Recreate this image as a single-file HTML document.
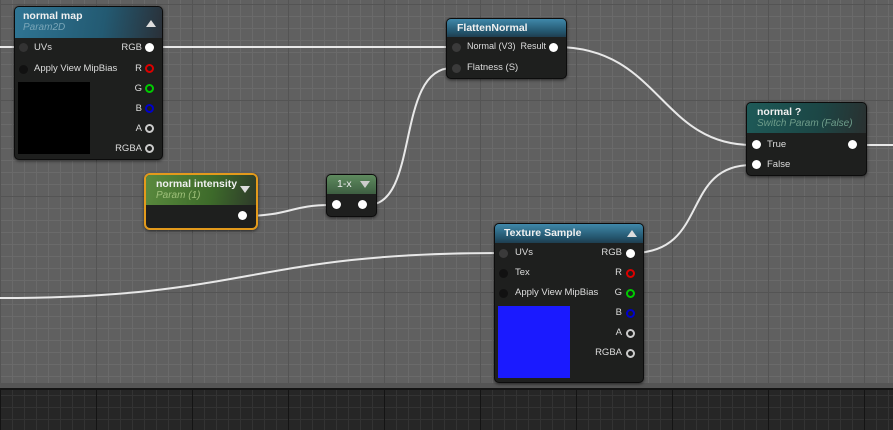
<!DOCTYPE html>
<html><head><meta charset="utf-8"><style>
*{margin:0;padding:0;box-sizing:border-box}
body{width:893px;height:430px;overflow:hidden;position:relative;font-family:"Liberation Sans",sans-serif;font-size:10px;color:#e6e6e6;
background-color:#606060;}
.grid{position:absolute;left:0;top:0;width:893px;height:388px;
background-image:
linear-gradient(to right,#545454 1px,transparent 1px),
linear-gradient(to bottom,#545454 1px,transparent 1px),
linear-gradient(to right,#6a6a6a 1px,transparent 1px),
linear-gradient(to bottom,#6a6a6a 1px,transparent 1px);
background-size:96px 96px,96px 96px,12px 12px,12px 12px;
background-position:0 4px,0 4px,0 4px,0 4px;}
.panel{position:absolute;left:0;top:388px;width:893px;height:42px;background-color:#262626;border-top:2px solid #141414;
background-image:
linear-gradient(to right,#141414 1px,transparent 1px),
linear-gradient(to right,#333 1px,transparent 1px),
linear-gradient(to bottom,#333 1px,transparent 1px);
background-size:96px 12px,12px 12px,12px 12px;background-position:0 0,0 0,0 5px}
.shadowbar{position:absolute;left:0;top:383px;width:893px;height:5px;background:#555}
svg{position:absolute;left:0;top:0}
.node{position:absolute;background:#1e1f1e;border:1px solid #0c0c0c;border-radius:5px;box-shadow:0 1px 3px rgba(0,0,0,.6);overflow:hidden}
.hd{position:relative;padding:3px 8px 0 8px;font-weight:bold;font-size:10.5px;color:#f0f0f0}
.blue{background:linear-gradient(to bottom,#3f88aa,#24566e 70%,#1f3e50)}
.blue2{background:linear-gradient(100deg,#2f7594 0%,#235a72 60%,#2a3038 100%)}
.teal{background:linear-gradient(100deg,#1e5a58 0%,#1c4645 60%,#2a3030 100%)}
.green{background:linear-gradient(100deg,#5a8a3e 0%,#3d6a2a 60%,#2e3a2a 100%)}
.sub{font-style:italic;font-weight:normal;font-size:10px;color:#7aa6b8}
.tri{position:absolute;right:6px;top:10px;width:0;height:0;border-left:5px solid transparent;border-right:5px solid transparent}
.up{border-bottom:7px solid #ddd}
.dn{border-top:7px solid #ddd}
.row{position:absolute;font-size:9.5px;color:#ddd;white-space:nowrap}
.rr{position:absolute;font-size:9.5px;color:#ddd;white-space:nowrap;text-align:right}
.pin{position:absolute;width:9px;height:9px;border-radius:50%}
.pw{background:#fff}
.po{border:2px solid}
.pd{background:#2b2b2b}
</style></head><body>
<div class="grid"></div>
<div class="shadowbar"></div>
<div class="panel"></div>
<svg width="893" height="430" fill="none" stroke="#e8e8e8" stroke-width="2">
<path d="M0 47 L20 47"/>
<path d="M152 47 L452 47"/>
<path d="M243 216 C290 216 290 205 331 205"/>
<path d="M368 205 C420 205 395 68 452 68"/>
<path d="M556 47 C660 47 660 145 752 145"/>
<path d="M632 253 C710 253 680 165 752 165"/>
<path d="M0 298 C250 298 250 253 500 253"/>
<path d="M858 145 L893 145"/>
</svg>

<!-- normal map -->
<div class="node" style="left:14px;top:6px;width:149px;height:154px">
<div class="hd blue2" style="height:31px">normal map<div class="sub">Param2D</div><div class="tri up" style="top:13px"></div></div>
</div>
<div class="row" style="left:34px;top:42px">UVs</div>
<div class="pin pd" style="left:19px;top:43px;background:#333"></div>
<div class="row" style="left:34px;top:63px">Apply View MipBias</div>
<div class="pin pd" style="left:19px;top:65px;background:#111"></div>
<div style="position:absolute;left:18px;top:82px;width:72px;height:72px;background:#000"></div>
<div class="rr" style="right:751px;top:42px">RGB</div><div class="pin pw" style="left:145px;top:43px"></div>
<div class="rr" style="right:751px;top:63px">R</div><div class="pin po" style="left:145px;top:64px;border-color:#d00"></div>
<div class="rr" style="right:751px;top:83px">G</div><div class="pin po" style="left:145px;top:84px;border-color:#0c0"></div>
<div class="rr" style="right:751px;top:103px">B</div><div class="pin po" style="left:145px;top:104px;border-color:#00c"></div>
<div class="rr" style="right:751px;top:123px">A</div><div class="pin po" style="left:145px;top:124px;border-color:#ccc"></div>
<div class="rr" style="right:751px;top:143px">RGBA</div><div class="pin po" style="left:145px;top:144px;border-color:#ccc"></div>

<!-- normal intensity -->
<div class="node" style="left:144px;top:173px;width:114px;height:57px;border:2px solid #e39a1c;border-radius:6px">
<div class="hd green" style="height:30px;padding-left:10px">normal intensity<div class="sub" style="color:#9fc07a">Param (1)</div><div class="tri dn" style="top:11px"></div></div>
</div>
<div class="pin pw" style="left:238px;top:211px"></div>

<!-- 1-x -->
<div class="node" style="left:326px;top:174px;width:51px;height:43px">
<div class="hd" style="height:19px;background:linear-gradient(to bottom,#5e8a5e,#3e5f42);font-weight:normal;padding-left:10px">1-x<div class="tri dn" style="top:6px;border-top-color:#ccc"></div></div>
</div>
<div class="pin pw" style="left:332px;top:200px"></div>
<div class="pin pw" style="left:358px;top:200px"></div>

<!-- FlattenNormal -->
<div class="node" style="left:446px;top:18px;width:121px;height:61px">
<div class="hd blue" style="height:18px;padding-left:10px">FlattenNormal</div>
</div>
<div class="pin" style="left:452px;top:43px;background:#3a3a3a"></div>
<div class="row" style="left:467px;top:41px;font-size:9px">Normal (V3)</div>
<div class="rr" style="right:347px;top:41px;font-size:9px">Result</div>
<div class="pin pw" style="left:549px;top:43px"></div>
<div class="pin" style="left:452px;top:64px;background:#3a3a3a"></div>
<div class="row" style="left:467px;top:62px">Flatness (S)</div>

<!-- normal ? -->
<div class="node" style="left:746px;top:102px;width:121px;height:74px">
<div class="hd teal" style="height:30px;padding-left:10px">normal ?<div class="sub" style="color:#6e9c8a">Switch Param (False)</div></div>
</div>
<div class="pin pw" style="left:752px;top:140px"></div><div class="row" style="left:767px;top:139px">True</div>
<div class="pin pw" style="left:752px;top:160px"></div><div class="row" style="left:767px;top:159px">False</div>
<div class="pin pw" style="left:848px;top:140px"></div>

<!-- Texture Sample -->
<div class="node" style="left:494px;top:223px;width:150px;height:160px">
<div class="hd blue" style="height:19px;padding-left:9px">Texture Sample<div class="tri up" style="top:6px"></div></div>
</div>
<div class="pin" style="left:499px;top:249px;background:#3a3a3a"></div><div class="row" style="left:515px;top:247px">UVs</div>
<div class="pin" style="left:499px;top:269px;background:#111"></div><div class="row" style="left:515px;top:267px">Tex</div>
<div class="pin" style="left:499px;top:289px;background:#111"></div><div class="row" style="left:515px;top:287px">Apply View MipBias</div>
<div style="position:absolute;left:498px;top:306px;width:72px;height:72px;background:#1a1aff"></div>
<div class="rr" style="right:271px;top:247px">RGB</div><div class="pin pw" style="left:626px;top:249px"></div>
<div class="rr" style="right:271px;top:267px">R</div><div class="pin po" style="left:626px;top:269px;border-color:#d00"></div>
<div class="rr" style="right:271px;top:287px">G</div><div class="pin po" style="left:626px;top:289px;border-color:#0c0"></div>
<div class="rr" style="right:271px;top:307px">B</div><div class="pin po" style="left:626px;top:309px;border-color:#00c"></div>
<div class="rr" style="right:271px;top:327px">A</div><div class="pin po" style="left:626px;top:329px;border-color:#ccc"></div>
<div class="rr" style="right:271px;top:347px">RGBA</div><div class="pin po" style="left:626px;top:349px;border-color:#ccc"></div>
</body></html>
